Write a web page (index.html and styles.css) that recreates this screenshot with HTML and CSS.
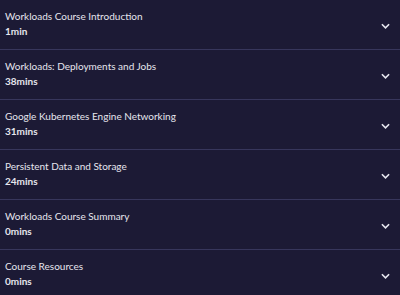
FILE: index.html
```html
<!DOCTYPE html>
<html>
<head>
  <title>Course Contents</title>
  <link rel="stylesheet" href="styles.css">
</head>
<body>
  <div class="modules">
    <div class="module">
      <div class="info">
        <p class="title">Workloads Course Introduction</p>
        <p class="time">1min</p>
      </div>
      <svg class="chevron" viewBox="0 0 10 6"><path d="M1 1l4 4 4-4"/></svg>
    </div>
    <div class="module">
      <div class="info">
        <p class="title">Workloads: Deployments and Jobs</p>
        <p class="time">38mins</p>
      </div>
      <svg class="chevron" viewBox="0 0 10 6"><path d="M1 1l4 4 4-4"/></svg>
    </div>
    <div class="module">
      <div class="info">
        <p class="title">Google Kubernetes Engine Networking</p>
        <p class="time">31mins</p>
      </div>
      <svg class="chevron" viewBox="0 0 10 6"><path d="M1 1l4 4 4-4"/></svg>
    </div>
    <div class="module">
      <div class="info">
        <p class="title">Persistent Data and Storage</p>
        <p class="time">24mins</p>
      </div>
      <svg class="chevron" viewBox="0 0 10 6"><path d="M1 1l4 4 4-4"/></svg>
    </div>
    <div class="module">
      <div class="info">
        <p class="title">Workloads Course Summary</p>
        <p class="time">0mins</p>
      </div>
      <svg class="chevron" viewBox="0 0 10 6"><path d="M1 1l4 4 4-4"/></svg>
    </div>
    <div class="module">
      <div class="info">
        <p class="title">Course Resources</p>
        <p class="time">0mins</p>
      </div>
      <svg class="chevron" viewBox="0 0 10 6"><path d="M1 1l4 4 4-4"/></svg>
    </div>
  </div>
</body>
</html>
```

FILE: styles.css
```css
body {
  margin: 0;
  background-color: #1c1a35;
  font-family: Lato, "Noto Sans", sans-serif;
  color: #e6e6ee;
}

.module {
  display: flex;
  align-items: center;
  justify-content: space-between;
  height: 49px;
  padding: 0 10px 0 5px;
  border-bottom: 1px solid #37365c;
}

.info {
  padding-bottom: 2px;
}

.title {
  margin: 0 0 3px;
  font-size: 10px;
  line-height: 12px;
}

.time {
  margin: 0;
  font-size: 10px;
  line-height: 12px;
  font-weight: bold;
}

.chevron {
  width: 9px;
  height: 6px;
  margin-top: 3px;
  fill: none;
  stroke: #e6e6ee;
  stroke-width: 1.8;
}
```
